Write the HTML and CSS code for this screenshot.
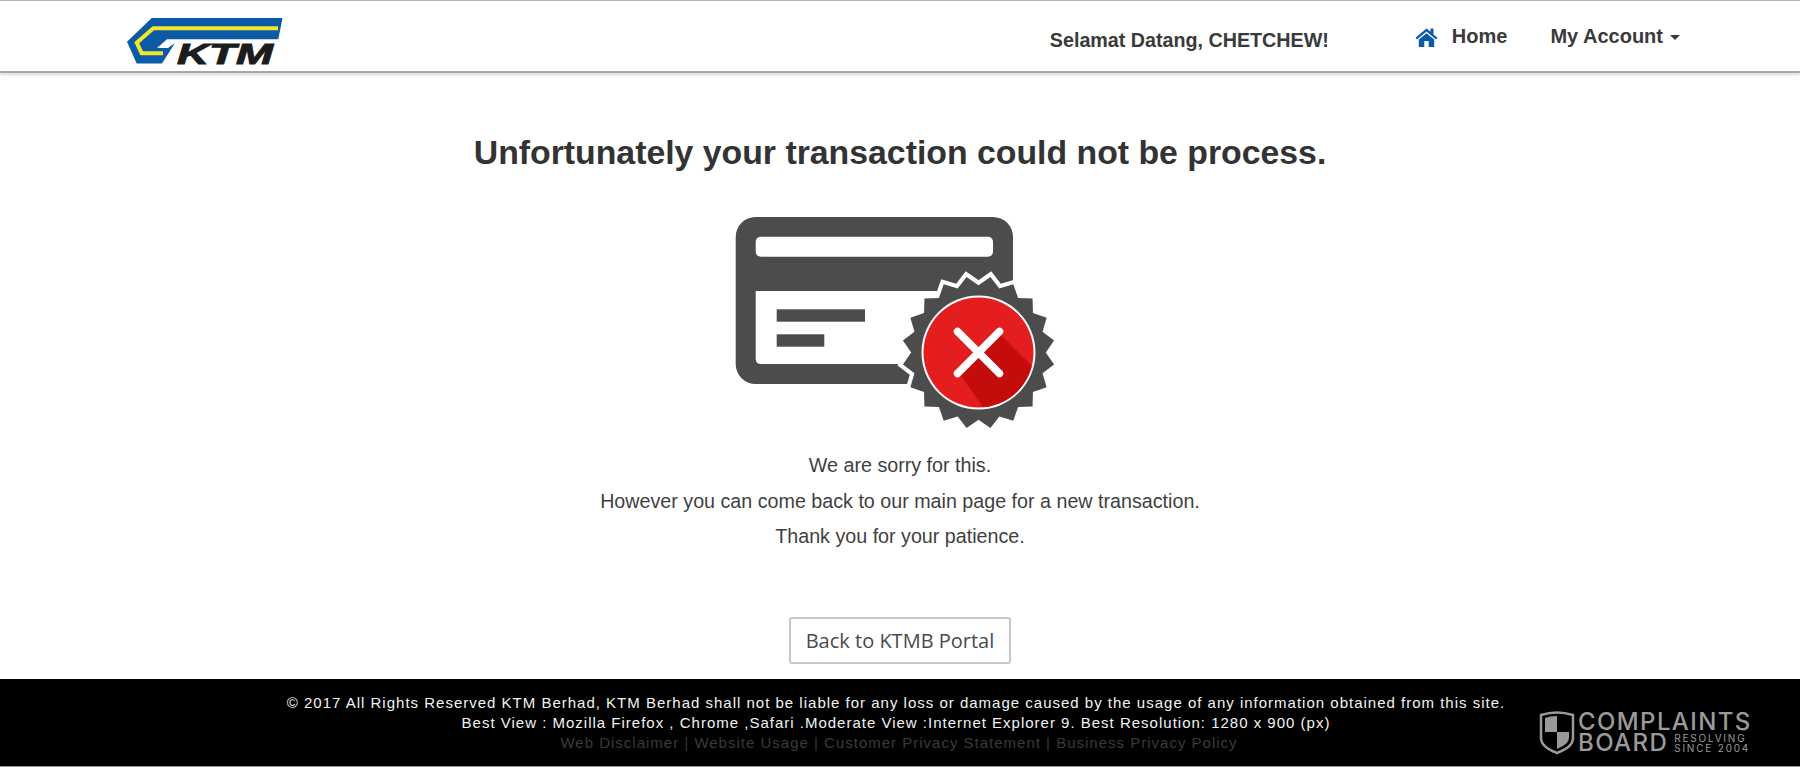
FILE: index.html
```html
<!DOCTYPE html>
<html lang="en">
<head>
  <meta charset="UTF-8">
  <title>KTMB Portal</title>
  <link rel="stylesheet" href="styles.css">
</head>
<body>
  <header class="topbar">
    <a class="logo" href="#">
      <svg width="156" height="54" viewBox="0 0 156 54">
        <polygon fill="#0d5aa7" points="24.7,1 155.5,1 151.3,22.3 40,22.3 30,31 41,31 48,26 35,46.5 9.7,46.5 0,24.7"/>
        <polyline fill="none" stroke="#f4e62a" stroke-width="4" points="151,11.3 26.3,11.3 9.7,25.7 14.7,36.3 36,36.3"/>
        <text class="logo-text" x="50" y="47" textLength="96" lengthAdjust="spacingAndGlyphs">KTM</text>
      </svg>
    </a>
    <span class="greeting">Selamat Datang, CHETCHEW!</span>
    <nav class="nav">
      <a class="nav-link" href="#">
        <svg class="home-icon" width="23" height="20" viewBox="0 0 23 20">
          <path fill="#0d5aa7" d="M11.5 1.5 L0.5 10.8 L2 12.4 L11.5 4.4 L21 12.4 L22.5 10.8 L18.5 7.4 L18.5 1.5 L15.5 1.5 L15.5 4.8 Z M3.8 12.6 L3.8 20 L9.3 20 L9.3 14 L13.7 14 L13.7 20 L19.2 20 L19.2 12.6 L11.5 6.2 Z"/>
        </svg>
        <span>Home</span>
      </a>
      <a class="nav-link" href="#"><span>My Account</span><span class="caret"></span></a>
    </nav>
  </header>

  <main class="content">
    <h1>Unfortunately your transaction could not be process.</h1>

    <svg class="card-icon" width="340" height="225" viewBox="0 0 340 225">
      <defs>
        <clipPath id="redCircle"><circle cx="0" cy="0" r="55"/></clipPath>
      </defs>
      <rect x="5.7" y="7" width="277.3" height="167" rx="20" fill="#4c4c4c"/>
      <rect x="25.7" y="26.7" width="237.3" height="20" rx="5" fill="#fff"/>
      <path fill="#fff" d="M25.7 81 H263 V154 H31 Q25.7 154 25.7 149 Z"/>
      <rect x="46.7" y="99.3" width="88.3" height="12.4" fill="#4c4c4c"/>
      <rect x="46.7" y="124.3" width="47.6" height="12.4" fill="#4c4c4c"/>
      <g transform="translate(248.5 142.5)">
        <polygon transform="scale(1.02)" fill="#4c4c4c" stroke="#fff" stroke-width="8" paint-order="stroke" points="66,0 74.1,11.7 62.8,20.4 66.8,34.1 53.4,38.8 53,53 38.8,53.4 34.1,66.8 20.4,62.8 11.7,74.1 0,66 -11.7,74.1 -20.4,62.8 -34.1,66.8 -38.8,53.4 -53,53 -53.4,38.8 -66.8,34.1 -62.8,20.4 -74.1,11.7 -66,0 -74.1,-11.7 -62.8,-20.4 -66.8,-34.1 -53.4,-38.8 -53,-53 -38.8,-53.4 -34.1,-66.8 -20.4,-62.8 -11.7,-74.1 0,-66 11.7,-74.1 20.4,-62.8 34.1,-66.8 38.8,-53.4 53,-53 53.4,-38.8 66.8,-34.1 62.8,-20.4 74.1,-11.7"/>
        <circle r="57" fill="#fff"/>
        <circle r="55" fill="#e41e1e"/>
        <polygon clip-path="url(#redCircle)" fill="#c40c0c" points="20,-20 80,40 30,90 -20,20"/>
        <path stroke="#fff" stroke-width="7.5" stroke-linecap="round" d="M-21 -21 L21 21 M21 -21 L-21 21"/>
      </g>
    </svg>

    <p>We are sorry for this.</p>
    <p>However you can come back to our main page for a new transaction.</p>
    <p>Thank you for your patience.</p>

    <a class="back-btn" href="#">Back to KTMB Portal</a>
  </main>

  <footer class="footer">
    <div>&copy; 2017 All Rights Reserved KTM Berhad, KTM Berhad shall not be liable for any loss or damage caused by the usage of any information obtained from this site.</div>
    <div>Best View : Mozilla Firefox , Chrome ,Safari .Moderate View :Internet Explorer 9. Best Resolution: 1280 x 900 (px)</div>
    <div class="footer-links">Web Disclaimer | Website Usage | Customer Privacy Statement | Business Privacy Policy</div>

    <div class="cb-mark">
      <svg width="36" height="44" viewBox="0 0 36 44">
        <path fill="none" stroke="#9a9a9a" stroke-width="2.5" d="M2 4 Q18 -1 34 4 V27 Q34 36 18 42 Q2 36 2 27 Z"/>
        <path fill="#9a9a9a" d="M6 7 Q11 5 18 5 V21 H6 Z M18 21 H30 V27 Q30 33 18 38 Z"/>
      </svg>
      <div class="cb-text">
        <div class="cb-big">COMPLAINTS</div>
        <div class="cb-row">
          <span class="cb-big">BOARD</span>
          <span class="cb-small">RESOLVING<br>SINCE 2004</span>
        </div>
      </div>
    </div>
  </footer>
</body>
</html>
```

FILE: styles.css
```css
html, body {
  margin: 0;
  padding: 0;
}
body {
  font-family: "Liberation Sans", Arial, sans-serif;
  color: #3a3a3a;
  background: #fff;
  height: 774px;
  overflow: hidden;
}
a {
  color: inherit;
  text-decoration: none;
}

.topbar {
  display: flex;
  align-items: flex-start;
  height: 70px;
  padding: 0 120px 0 127px;
  border-top: 1px solid #b5b5b5;
  border-bottom: 2px solid #a8a8a8;
  box-shadow: 0 2px 3px rgba(0, 0, 0, 0.15);
}
.logo {
  display: block;
  margin-top: 16px;
  height: 54px;
}
.logo-text {
  font-family: "Liberation Sans", Arial, sans-serif;
  font-size: 30px;
  font-weight: bold;
  font-style: italic;
  fill: #1c1c1c;
  stroke: #1c1c1c;
  stroke-width: 1px;
}
.greeting {
  margin-left: auto;
  margin-top: 28px;
  font-size: 19.7px;
  font-weight: bold;
  line-height: 23px;
}
.nav {
  display: flex;
  gap: 43px;
  margin-left: 86px;
  margin-top: 24px;
}
.nav-link {
  display: flex;
  align-items: center;
  font-size: 20px;
  font-weight: bold;
  line-height: 23px;
}
.home-icon {
  margin-right: 14px;
}
.caret {
  display: inline-block;
  width: 0;
  height: 0;
  margin-left: 7px;
  margin-top: 2px;
  border-top: 5px solid #3a3a3a;
  border-left: 5px solid transparent;
  border-right: 5px solid transparent;
}

.content {
  display: flex;
  flex-direction: column;
  align-items: center;
  height: 606px;
}
.content h1 {
  margin: 59px 0 0;
  font-size: 33.8px;
  line-height: 40px;
  font-weight: bold;
  color: #333;
}
.card-icon {
  margin-top: 38px;
  margin-bottom: 13px;
  margin-left: -1px;
}
.content p {
  margin: 0;
  font-size: 19.7px;
  line-height: 35.5px;
  color: #3f3f3f;
}
.back-btn {
  margin-top: 62px;
  width: 222px;
  height: 47px;
  box-sizing: border-box;
  border: 2px solid #c8c8c8;
  border-radius: 3px;
  font-family: "Open Sans", sans-serif;
  font-size: 20px;
  line-height: 44px;
  text-align: center;
  color: #4a4a4a;
  background: #fff;
}

.footer {
  position: relative;
  box-sizing: border-box;
  height: 88px;
  padding: 14px 8px 0 0;
  background: #000;
  border-bottom: 1px solid #999;
  color: #f2f2f2;
  font-size: 15px;
  line-height: 20px;
  letter-spacing: 1px;
  text-align: center;
}
.footer-links {
  padding-left: 6px;
  color: #3a3a3a;
}
.cb-mark {
  position: absolute;
  left: 1539px;
  top: 32px;
  display: flex;
  gap: 3px;
  color: #9a9a9a;
  letter-spacing: 0;
  text-align: left;
  font-family: Inter, sans-serif;
}
.cb-big {
  font-size: 24px;
  font-weight: 500;
  line-height: 21px;
  letter-spacing: 1.4px;
}
.cb-row {
  display: flex;
  align-items: center;
  gap: 6px;
}
.cb-small {
  font-size: 10px;
  line-height: 10px;
  letter-spacing: 1.8px;
}
```
